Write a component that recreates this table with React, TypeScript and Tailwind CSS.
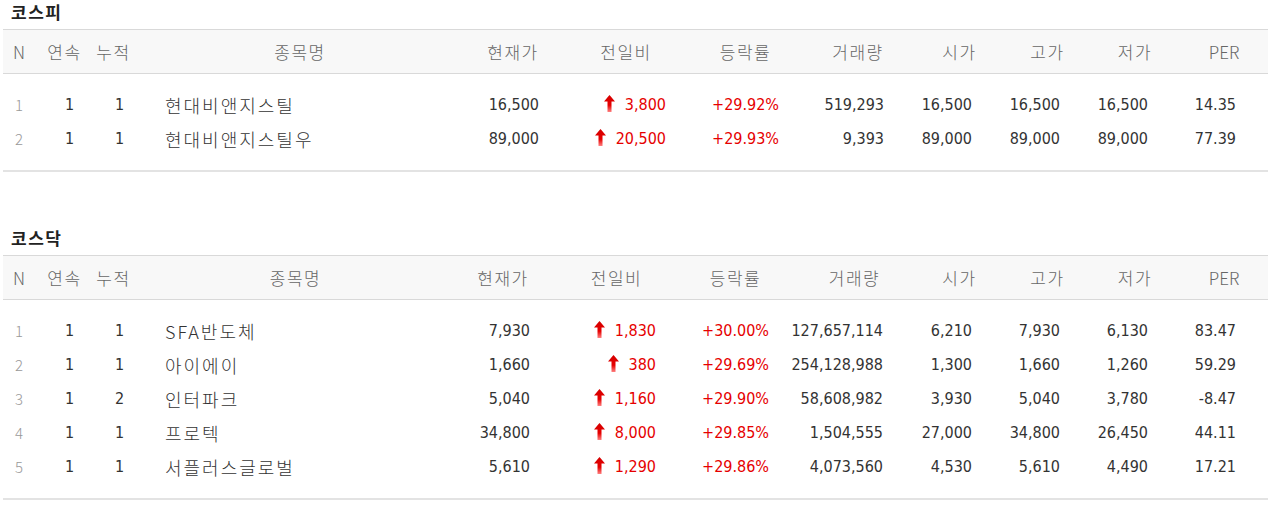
import React from "react";

type Row = {
  n: number;
  a: number;
  b: number;
  name: string;
  price: string;
  diff: string;
  rate: string;
  vol: string;
  open: string;
  high: string;
  low: string;
  per: string;
};

const kospi: Row[] = [
  { n: 1, a: 1, b: 1, name: "현대비앤지스틸", price: "16,500", diff: "3,800", rate: "+29.92%", vol: "519,293", open: "16,500", high: "16,500", low: "16,500", per: "14.35" },
  { n: 2, a: 1, b: 1, name: "현대비앤지스틸우", price: "89,000", diff: "20,500", rate: "+29.93%", vol: "9,393", open: "89,000", high: "89,000", low: "89,000", per: "77.39" },
];

const kosdaq: Row[] = [
  { n: 1, a: 1, b: 1, name: "SFA반도체", price: "7,930", diff: "1,830", rate: "+30.00%", vol: "127,657,114", open: "6,210", high: "7,930", low: "6,130", per: "83.47" },
  { n: 2, a: 1, b: 1, name: "아이에이", price: "1,660", diff: "380", rate: "+29.69%", vol: "254,128,988", open: "1,300", high: "1,660", low: "1,260", per: "59.29" },
  { n: 3, a: 1, b: 2, name: "인터파크", price: "5,040", diff: "1,160", rate: "+29.90%", vol: "58,608,982", open: "3,930", high: "5,040", low: "3,780", per: "-8.47" },
  { n: 4, a: 1, b: 1, name: "프로텍", price: "34,800", diff: "8,000", rate: "+29.85%", vol: "1,504,555", open: "27,000", high: "34,800", low: "26,450", per: "44.11" },
  { n: 5, a: 1, b: 1, name: "서플러스글로벌", price: "5,610", diff: "1,290", rate: "+29.86%", vol: "4,073,560", open: "4,530", high: "5,610", low: "4,490", per: "17.21" },
];

const KR = "font-['Noto_Sans_CJK_KR',sans-serif]";
const NUM = "font-['DejaVu_Sans',sans-serif] [font-stretch:condensed]";

function UpArrow() {
  return (
    <svg width="11" height="17" viewBox="0 0 11 17" className="shrink-0 -mt-[3px]">
      <defs>
        <linearGradient id="ag" x1="0" y1="0" x2="0" y2="1">
          <stop offset="0" stopColor="#d40000" />
          <stop offset="0.6" stopColor="#e60000" />
          <stop offset="1" stopColor="#ff8080" />
        </linearGradient>
      </defs>
      <polygon points="5.5,0 11,6.5 7.5,6.5 7.5,17 3.5,17 3.5,6.5 0,6.5" fill="url(#ag)" />
    </svg>
  );
}

type Layout = {
  cols: string;
  head: string[];
  data: string[];
};

const layout1: Layout = {
  cols: "grid-cols-[32px_59px_39px_334px_92px_134px_105px_120px_83px_93px_82px_92px]",
  head: ["text-center", "text-center", "text-center", "text-center", "text-center", "text-center", "text-center", "text-center", "text-center", "text-center", "text-center", "text-center pl-[4px]"],
  data: ["text-center", "text-center pl-[10px]", "text-center pl-[12px]", "text-left pl-[32px]", "text-right pr-[20px]", "pr-[27px]", "text-right pr-[19px]", "text-right pr-[34px]", "text-right pr-[29px]", "text-right pr-[34px]", "text-right pr-[28px]", "text-right pr-[32px]"],
};

const layout2: Layout = {
  cols: "grid-cols-[32px_59px_39px_325px_90px_137px_101px_132px_83px_93px_82px_92px]",
  head: ["text-center", "text-center", "text-center", "text-center", "text-center", "text-center", "text-center", "text-center pl-[5px]", "text-center", "text-center", "text-center", "text-center pl-[4px]"],
  data: ["text-center", "text-center pl-[10px]", "text-center pl-[12px]", "text-left pl-[32px]", "text-right pr-[18px]", "pr-[29px]", "text-right pr-[17px]", "text-right pr-[35px]", "text-right pr-[29px]", "text-right pr-[34px]", "text-right pr-[28px]", "text-right pr-[32px]"],
};

const headers = ["N", "연속", "누적", "종목명", "현재가", "전일비", "등락률", "거래량", "시가", "고가", "저가", "PER"];

function Table({ title, rows, l }: { title: string; rows: Row[]; l: Layout }) {
  return (
    <section className="ml-[3px]">
      <h2 className={`${KR} h-[29px] pl-[8px] text-[17px] leading-[24px] font-bold tracking-[1.5px] text-[#222]`}>{title}</h2>
      <div className={`grid ${l.cols} h-[45px] items-center border-y border-[#d9d9d9] bg-[#f8f8f8]`}>
        {headers.map((h, i) => (
          <div key={h} className={`${KR} ${l.head[i]} text-[17px] font-light text-[#666] ${i === 0 || i === 11 ? "tracking-normal" : "tracking-[1.5px]"}`}>
            {h}
          </div>
        ))}
      </div>
      <div className="pt-[14px] pb-[14px] border-b-2 border-[#e3e3e3]">
        {rows.map((r) => (
          <div key={r.n} className={`grid ${l.cols} h-[34px] items-center text-[16px] text-[#333]`}>
            <div className={`${KR} ${l.data[0]} font-light text-[#999] text-[15px]`}>{r.n}</div>
            <div className={`${NUM} ${l.data[1]}`}>{r.a}</div>
            <div className={`${NUM} ${l.data[2]}`}>{r.b}</div>
            <div className={`${KR} ${l.data[3]} text-[18px] font-light tracking-[2px] text-[#333]`}>{r.name}</div>
            <div className={`${NUM} ${l.data[4]}`}>{r.price}</div>
            <div className={`${NUM} ${l.data[5]} flex items-center justify-end gap-[10px] text-[#e60000]`}>
              <UpArrow />
              <span>{r.diff}</span>
            </div>
            <div className={`${NUM} ${l.data[6]} text-[#e60000]`}>{r.rate}</div>
            <div className={`${NUM} ${l.data[7]}`}>{r.vol}</div>
            <div className={`${NUM} ${l.data[8]}`}>{r.open}</div>
            <div className={`${NUM} ${l.data[9]}`}>{r.high}</div>
            <div className={`${NUM} ${l.data[10]}`}>{r.low}</div>
            <div className={`${NUM} ${l.data[11]}`}>{r.per}</div>
          </div>
        ))}
      </div>
    </section>
  );
}

export default function App() {
  return (
    <div className="w-[1268px] h-[515px] bg-white overflow-hidden">
      <Table title="코스피" rows={kospi} l={layout1} />
      <div className="h-[54px]" />
      <Table title="코스닥" rows={kosdaq} l={layout2} />
    </div>
  );
}
